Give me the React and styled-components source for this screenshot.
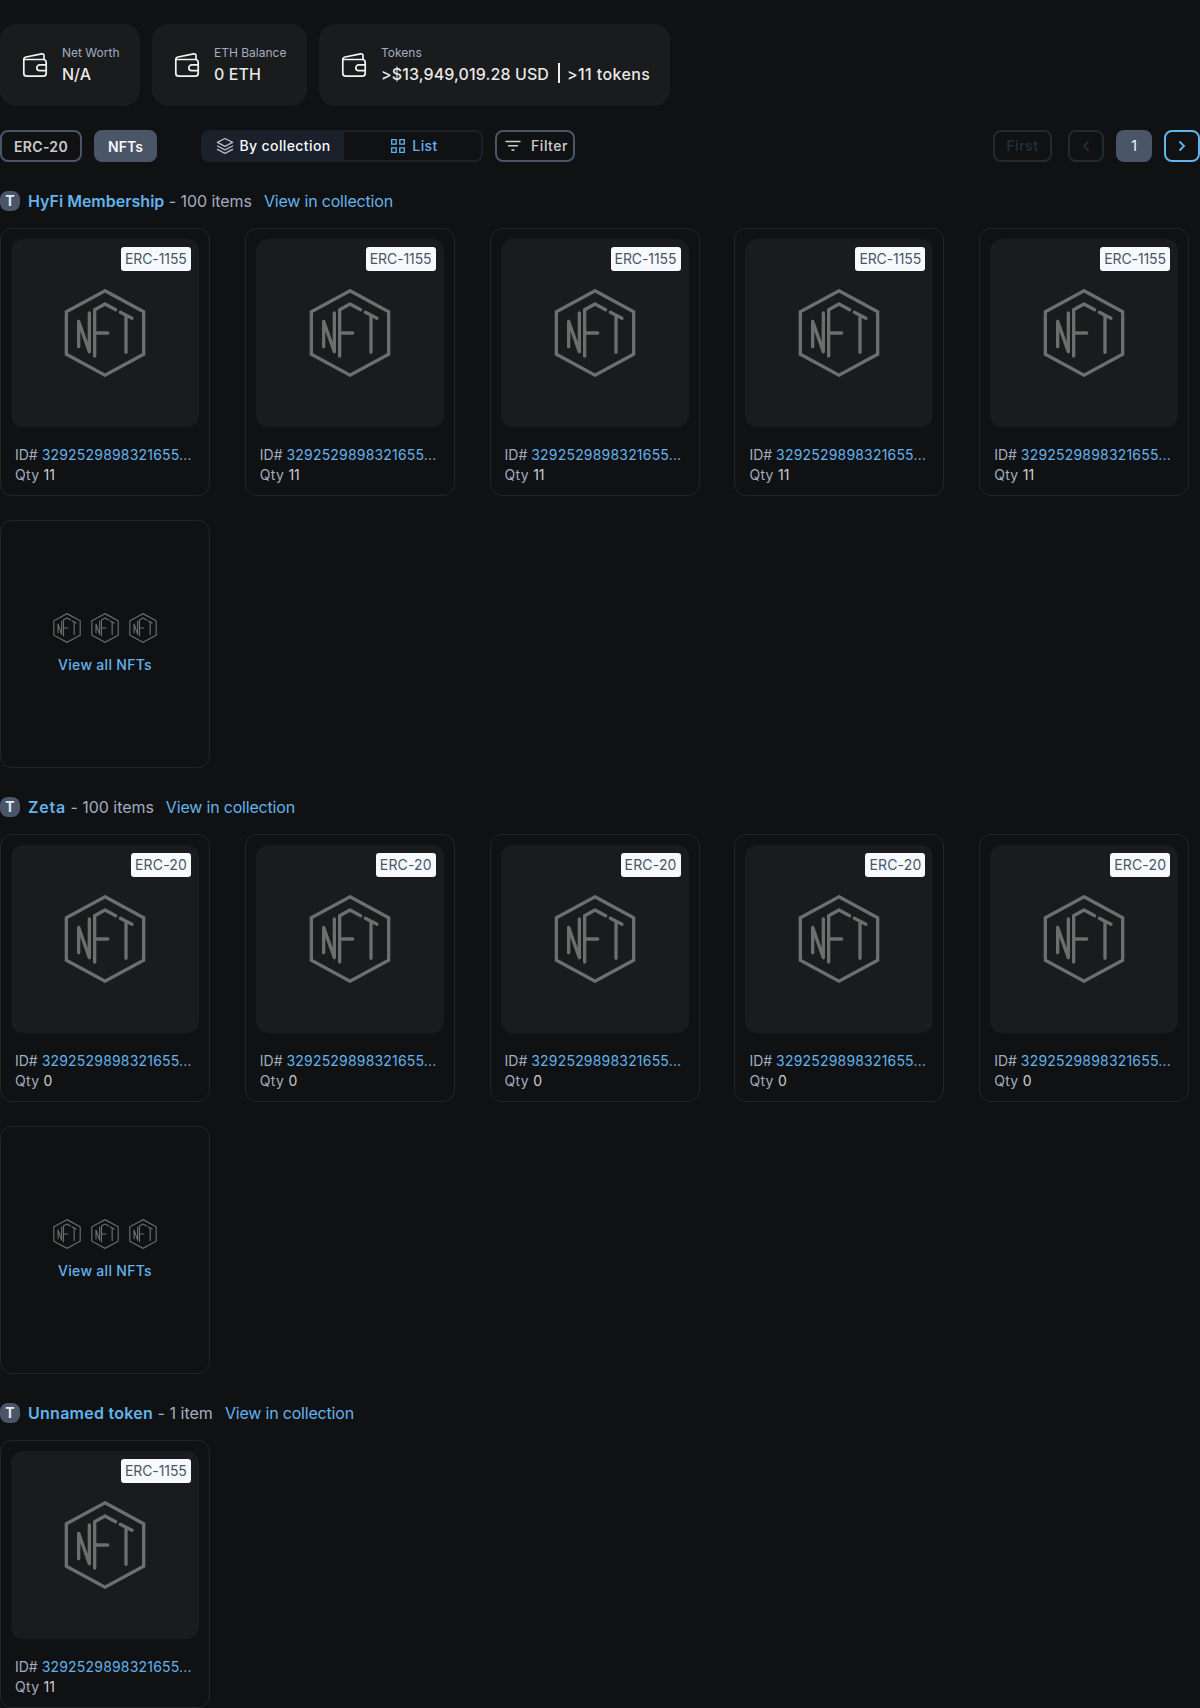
import React from 'react';
import styled, { createGlobalStyle, css } from 'styled-components';

const GlobalStyle = createGlobalStyle`
  *, *::before, *::after { box-sizing: border-box; }
  body {
    margin: 0;
    background: #101112;
    color: rgba(255, 255, 255, 0.8);
    font-family: Inter, "Liberation Sans", sans-serif;
    font-size: 16px;
    line-height: 24px;
  }
  button { font-family: inherit; margin: 0; }
  a { color: #63b3ed; text-decoration: none; }
`;

const Page = styled.main`
  width: 1200px;
  height: 1708px;
  padding-top: 24px;
  overflow: hidden;
`;

const Stats = styled.div`
  display: flex;
  gap: 12px;
`;

const StatCard = styled.div`
  display: flex;
  align-items: center;
  gap: 12px;
  width: ${(p) => p.$width}px;
  height: 82px;
  padding: 20px;
  border-radius: 16px;
  background: #1a1b1c;
  white-space: nowrap;
  svg { flex: none; color: #f2f4f2; }
`;

const StatText = styled.div`
  display: flex;
  flex-direction: column;
`;

const StatLabel = styled.span`
  padding: 1px 0;
  font-size: 12px;
  line-height: 16px;
  color: #a0aec0;
`;

const StatValue = styled.span`
  display: flex;
  font-weight: 500;
  letter-spacing: ${(p) => p.$tracking || 0}px;
  color: rgba(255, 255, 255, 0.92);
`;

const Divider = styled.i`
  width: 2px;
  height: 20px;
  margin: 1px 7px 0 9px;
  background: currentColor;
`;

const TokenCount = styled.span`
  letter-spacing: 0.38px;
`;

const Toolbar = styled.div`
  display: flex;
  align-items: center;
  height: 32px;
  margin-top: 24px;
`;

const Group = styled.div`
  display: flex;
  gap: 12px;
  margin-left: ${(p) => p.$left || 0};
`;

const tones = {
  outline: css`border-color: #4a5568; color: rgba(255, 255, 255, 0.8);`,
  solid: css`border-color: #4a5568; background: #4a5568; color: #f7fafc;`,
  disabled: css`border-color: #1e2a34; color: #1f2f3c;`,
  accent: css`border-color: #63b3ed; color: #63b3ed;`,
};

const Button = styled.button`
  display: flex;
  align-items: center;
  justify-content: center;
  gap: 10px;
  width: ${(p) => p.$width}px;
  height: 32px;
  padding: ${(p) => (p.$low ? '1px 0 0' : p.$shift ? '0 0 0 3px' : '0')};
  border: 2px solid;
  border-radius: 8px;
  background: none;
  font-size: 14px;
  line-height: 20px;
  font-weight: ${(p) => p.$weight || 600};
  letter-spacing: ${(p) => p.$tracking || 0}px;
  white-space: nowrap;
  ${(p) => tones[p.$tone]}
`;

const Segmented = styled.div`
  display: flex;
  width: 282px;
  height: 32px;
  border: 2px solid #1a202c;
  border-radius: 8px;
  overflow: hidden;
`;

const Segment = styled.button`
  display: flex;
  align-items: center;
  justify-content: center;
  gap: ${(p) => (p.$active ? 5 : 6)}px;
  width: ${(p) => (p.$active ? 141 : 137)}px;
  padding: ${(p) => (p.$active ? 0 : '0 0 0 3px')};
  border: 0;
  background: ${(p) => (p.$active ? '#1a202c' : 'transparent')};
  color: ${(p) => (p.$active ? '#f7fafc' : '#63b3ed')};
  font-size: 14px;
  line-height: 20px;
  font-weight: 500;
  letter-spacing: 0.4px;
  white-space: nowrap;
`;

const Section = styled.section`
  margin-top: 27px;
`;

const SectionHead = styled.div`
  display: flex;
  align-items: center;
  height: 24px;
  margin-bottom: 15px;
  color: #a0aec0;
  white-space: pre;
`;

const TokenBadge = styled.span`
  width: 20px;
  height: 20px;
  margin-right: 8px;
  border-radius: 8px;
  background: #4a5568;
  color: #e2e8f0;
  font-size: 14px;
  line-height: 20px;
  font-weight: 700;
  text-align: center;
`;

const TokenName = styled.a`
  font-weight: 600;
  letter-spacing: ${(p) => p.$tracking}px;
`;

const ItemCount = styled.span`
  letter-spacing: ${(p) => p.$tracking}px;
`;

const CollectionLink = styled.a`
  margin-left: 12px;
  letter-spacing: -0.19px;
`;

const Grid = styled.div`
  display: grid;
  grid-template-columns: repeat(5, 1fr);
  gap: 24px;
`;

const Card = styled.article`
  width: 210px;
  height: 268px;
  padding: 10px;
  border: 1px solid #232425;
  border-radius: 12px;
`;

const AllCard = styled(Card)`
  display: flex;
  flex-direction: column;
  align-items: center;
  justify-content: center;
  gap: 12px;
  height: 248px;
  font-size: 14px;
  line-height: 20px;
`;

const Media = styled.div`
  position: relative;
  display: flex;
  align-items: center;
  justify-content: center;
  height: 188px;
  margin-bottom: 18px;
  border-radius: 12px;
  background: #1a1b1c;
`;

const TypeTag = styled.span`
  position: absolute;
  top: 8px;
  right: 8px;
  width: ${(p) => p.$width}px;
  height: 24px;
  padding: 0 4px;
  border-radius: 3px;
  background: #f7fafc;
  color: #4a5568;
  font-size: 14px;
  line-height: 24px;
  letter-spacing: ${(p) => p.$tracking}px;
  white-space: nowrap;
`;

const Meta = styled.div`
  padding: 0 4px;
  font-size: 14px;
  line-height: 20px;
  color: #a0aec0;
  white-space: nowrap;
  letter-spacing: ${(p) => p.$tracking || 0}px;
  a { letter-spacing: 0.19px; }
  b { font-weight: 400; letter-spacing: 0; color: rgba(255, 255, 255, 0.8); }
`;

const Previews = styled.div`
  display: flex;
  gap: 8px;
`;

const AllLink = styled.a`
  font-weight: 500;
  letter-spacing: 0.3px;
`;

const NftIcon = ({ size }) => (
  <svg width={size} height={size} viewBox="33 42 264 264" fill="none" stroke="#6d6e6e" strokeWidth="10">
    <path d="M165 47.500L281 110V238L165 300.500L49 238V110Z" />
    <g strokeLinecap="round" strokeLinejoin="round">
      <path d="M86 215V139L118 230V114" />
      <path d="M134 243V104L165 87L197 104M134 174H173" />
      <path d="M211 112L246 130M228 121V232" />
    </g>
  </svg>
);

const WalletIcon = () => (
  <svg width="30" height="30" viewBox="0 0 30 30" fill="none" stroke="currentColor" strokeWidth="1.700" strokeLinejoin="round" strokeLinecap="round">
    <path d="M3.800 9.500V23.200Q3.800 26.200 6.800 26.200H23.200Q26.200 26.200 26.200 23.200V12.500Q26.200 9.500 23.200 9.500ZM3.800 9.500Q3.800 7.500 6 7L21.600 3.900Q24 3.500 24 5.800V9.500" />
    <path d="M26.200 14.900H19.700A2.900 2.900 0 0 0 19.700 20.700H26.200" />
  </svg>
);

const LayersIcon = () => (
  <svg width="18" height="18" viewBox="0 0 18 18" fill="none" stroke="#b9bcc1" strokeWidth="1.300" strokeLinejoin="round" strokeLinecap="round">
    <path d="M9 1.500L16.600 5.400L9 9.300L1.400 5.400ZM1.400 9L9 12.900L16.600 9M1.400 12.400L9 16.300L16.600 12.400" />
  </svg>
);

const GridIcon = () => (
  <svg width="16" height="16" viewBox="0 0 16 16" fill="none" stroke="currentColor" strokeWidth="1.300">
    <path d="M1.700 1.700H6.200V6.200H1.700ZM9.800 1.700H14.300V6.200H9.800ZM1.700 9.800H6.200V14.300H1.700ZM9.800 9.800H14.300V14.300H9.800Z" />
  </svg>
);

const FilterIcon = () => (
  <svg width="16" height="12" viewBox="0 0 16 12" fill="none" stroke="currentColor" strokeWidth="1.400" strokeLinecap="round">
    <path d="M1 1.500H15M3.500 5.800H12.500M7 10H9" />
  </svg>
);

const Chevron = ({ flip }) => (
  <svg width="8" height="12" viewBox="0 0 8 12" fill="none" stroke="currentColor" strokeWidth="1.900">
    <path d={flip ? 'M6.500 1.500L2 6L6.500 10.500' : 'M1.500 1.500L6 6L1.500 10.500'} />
  </svg>
);

const collections = [
  { name: 'HyFi Membership', tracking: 0, count: '100 items', countTracking: -0.06, type: 'ERC-1155', qty: 11, cards: 5, more: true },
  { name: 'Zeta', tracking: 0.8, count: '100 items', countTracking: -0.04, type: 'ERC-20', qty: 0, cards: 5, more: true },
  { name: 'Unnamed token', tracking: 0.26, count: '1 item', countTracking: 0.02, type: 'ERC-1155', qty: 11, cards: 1 },
];

const tagSizes = {
  'ERC-1155': { $width: 70, $tracking: -0.1 },
  'ERC-20': { $width: 60, $tracking: 0.17 },
};

const Stat = ({ label, width, tracking, children }) => (
  <StatCard $width={width}>
    <WalletIcon />
    <StatText>
      <StatLabel>{label}</StatLabel>
      <StatValue $tracking={tracking}>{children}</StatValue>
    </StatText>
  </StatCard>
);

const NftCard = ({ type, qty }) => (
  <Card>
    <Media>
      <NftIcon size={88} />
      <TypeTag {...tagSizes[type]}>{type}</TypeTag>
    </Media>
    <Meta>ID# <a href="#id">3292529898321655...</a></Meta>
    <Meta $tracking={0.3}>Qty <b>{qty}</b></Meta>
  </Card>
);

export default function App() {
  return (
    <Page>
      <GlobalStyle />
      <Stats>
        <Stat label="Net Worth" width={140}>N/A</Stat>
        <Stat label="ETH Balance" width={155} tracking={0.1}>0 ETH</Stat>
        <Stat label="Tokens" width={351} tracking={0.1}>
          &gt;$13,949,019.28 USD<Divider /><TokenCount>&gt;11 tokens</TokenCount>
        </Stat>
      </Stats>
      <Toolbar>
        <Group>
          <Button $width={82} $tone="outline" $tracking={0.3} $low>ERC-20</Button>
          <Button $width={63} $tone="solid" $low>NFTs</Button>
        </Group>
        <Group $left="44px">
          <Segmented>
            <Segment $active><LayersIcon />By collection</Segment>
            <Segment><GridIcon />List</Segment>
          </Segmented>
          <Button $width={80} $tone="outline" $weight={500} $tracking={0.5} $shift><FilterIcon />Filter</Button>
        </Group>
        <Group $left="auto">
          <Button $width={59} $tone="disabled" $tracking={0.4}>First</Button>
          <Group $left="4px">
            <Button $width={36} $tone="disabled"><Chevron flip /></Button>
            <Button $width={36} $tone="solid" $weight={400}>1</Button>
            <Button $width={36} $tone="accent"><Chevron /></Button>
          </Group>
        </Group>
      </Toolbar>
      {collections.map((c) => (
        <Section key={c.name}>
          <SectionHead>
            <TokenBadge>T</TokenBadge>
            <TokenName href="#token" $tracking={c.tracking}>{c.name}</TokenName>
            <ItemCount $tracking={c.countTracking}>{` - ${c.count}`}</ItemCount>
            <CollectionLink href="#collection">View in collection</CollectionLink>
          </SectionHead>
          <Grid>
            {Array.from({ length: c.cards }, (_, i) => (
              <NftCard key={i} type={c.type} qty={c.qty} />
            ))}
            {c.more && (
              <AllCard>
                <Previews>
                  <NftIcon size={30} />
                  <NftIcon size={30} />
                  <NftIcon size={30} />
                </Previews>
                <AllLink href="#all">View all NFTs</AllLink>
              </AllCard>
            )}
          </Grid>
        </Section>
      ))}
    </Page>
  );
}
